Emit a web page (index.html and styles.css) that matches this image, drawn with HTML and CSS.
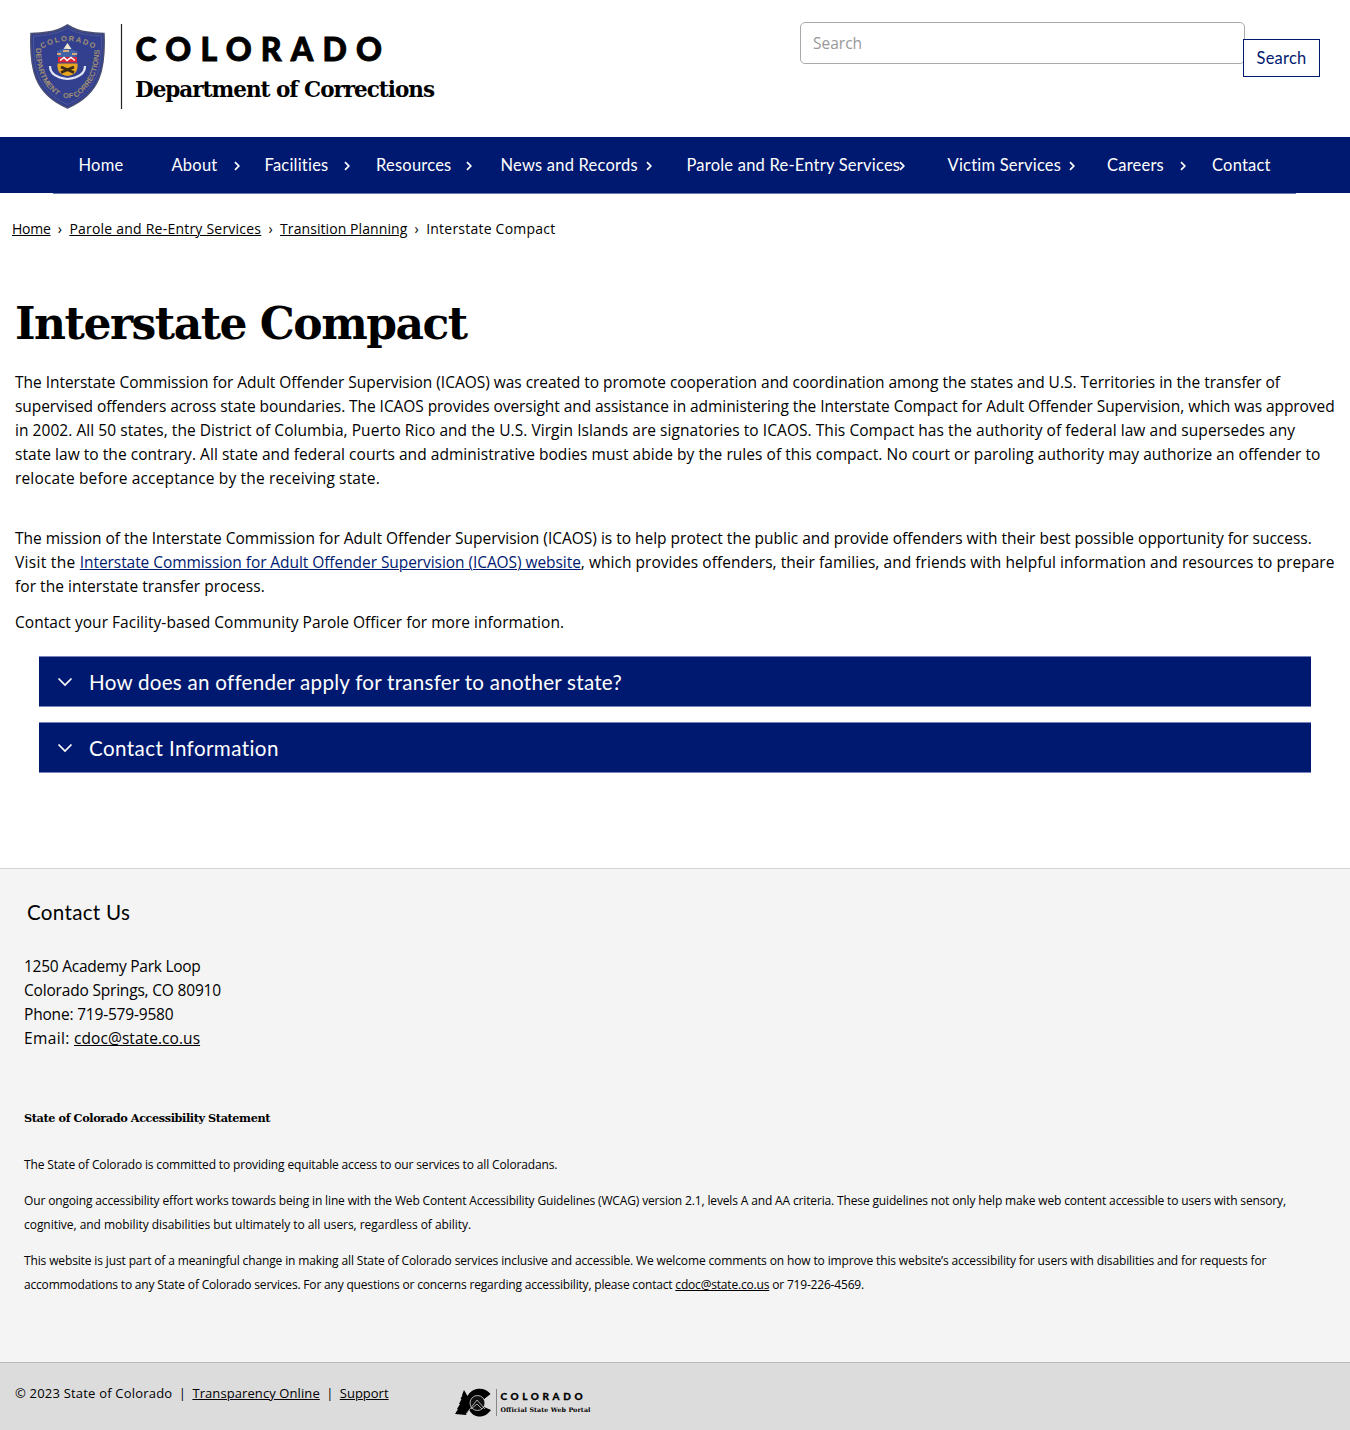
FILE: index.html
```html
<!DOCTYPE html>
<html lang="en">
<head>
<meta charset="utf-8">
<title>Interstate Compact | Department of Corrections</title>
<link rel="stylesheet" href="styles.css">
</head>
<body>
<header class="site-header">
  <a class="brand" href="#">
    <svg class="brand-logo" viewBox="0 0 410 90" width="410" height="90" role="img" aria-label="Colorado Department of Corrections">
      <defs>
        <path id="arc-top" d="M12 26 Q37.500 10 64 26"/>
        <path id="arc-left" d="M6 25 C6 51 14 64 29 74"/>
        <path id="arc-right" d="M46 75 C62 63 69 50 69.500 24"/>
      </defs>
      <path d="M37.500 2 C44 6 50 8.500 57 9 C62 10 68 10.500 74 10.500 C75.500 46 70.500 71 37.500 85 C4.500 71 -.5 46 1 10.500 C7 10.500 13 10 18 9 C25 8.500 31 6 37.500 2Z" fill="#33408f" stroke="#4b5073" stroke-width="1.500"/>
      <path d="M37.500 5 C45 10 58 12.500 71.500 13 C72 46 67 68.500 37.500 81.500 C8 68.500 3 46 3.500 13 C17 12.500 30 10 37.500 5Z" fill="none" stroke="#586094" stroke-width=".7"/>
      <g class="shield-text">
        <text><textPath href="#arc-top" textLength="55">COLORADO</textPath></text>
        <text><textPath href="#arc-left" textLength="55" lengthAdjust="spacingAndGlyphs">DEPARTMENT</textPath></text>
        <text><textPath href="#arc-right" textLength="56" lengthAdjust="spacingAndGlyphs">CORRECTIONS</textPath></text>
        <text x="33" y="75">OF</text>
      </g>
      <path d="M37.500 20 L41.500 26 H33.500Z" fill="#f2ead0"/>
      <path d="M27 28 Q37 23 48 29 L46 34 H28Z" fill="#4163a8"/>
      <path d="M27 31 h4 M33 28 h6 M42 31 h5" stroke="#d9a77a" stroke-width="2"/>
      <path d="M28 34 H47 V39.500 H28Z" fill="#d5293b"/>
      <path d="M30 37.500 l4 -3 3 3 4 -3 4 3" stroke="#fff" stroke-width="1.500" fill="none"/>
      <path d="M27.500 40.500 H47.500 Q48.500 52 37.500 53 Q26.500 52 27.500 40.500Z" fill="#e8a51d"/>
      <path d="M31 44 l13 5.500 M44 44 l-13 5.500" stroke="#3a2b17" stroke-width="2.800"/>
      <path d="M20 43 Q20 54 37.500 56 Q55 54 55 43" stroke="#e2e5f3" stroke-width="2.200" fill="none"/>
      <path d="M91.500 1 V86" stroke="#222" stroke-width="1.200"/>
      <text class="brand-state" x="105.500" y="37.500" textLength="246.500">COLORADO</text>
      <text class="brand-dept" x="105" y="73.500" textLength="300">Department of Corrections</text>
    </svg>
  </a>
  <form class="search">
    <input class="search-field" type="text" placeholder="Search" aria-label="Search">
    <button class="search-button" type="button">Search</button>
  </form>
</header>
<nav class="main-nav">
  <ul class="nav-list">
    <li><a href="#"><span>Home</span></a></li>
    <li><a href="#"><span>About</span><svg class="chev" viewBox="0 0 6 10"><path d="M1 1.200 4.800 5 1 8.800"/></svg></a></li>
    <li><a href="#"><span>Facilities</span><svg class="chev" viewBox="0 0 6 10"><path d="M1 1.200 4.800 5 1 8.800"/></svg></a></li>
    <li><a href="#"><span>Resources</span><svg class="chev" viewBox="0 0 6 10"><path d="M1 1.200 4.800 5 1 8.800"/></svg></a></li>
    <li><a href="#"><span>News and Records</span><svg class="chev" viewBox="0 0 6 10"><path d="M1 1.200 4.800 5 1 8.800"/></svg></a></li>
    <li><a href="#"><span>Parole and Re-Entry Services</span><svg class="chev" viewBox="0 0 6 10"><path d="M1 1.200 4.800 5 1 8.800"/></svg></a></li>
    <li><a href="#"><span>Victim Services</span><svg class="chev" viewBox="0 0 6 10"><path d="M1 1.200 4.800 5 1 8.800"/></svg></a></li>
    <li><a href="#"><span>Careers</span><svg class="chev" viewBox="0 0 6 10"><path d="M1 1.200 4.800 5 1 8.800"/></svg></a></li>
    <li><a href="#"><span>Contact</span></a></li>
  </ul>
</nav>
<div class="breadcrumb">
  <a href="#">Home</a><i>›</i><a href="#">Parole and Re-Entry Services</a><i>›</i><a href="#">Transition Planning</a><i>›</i><span>Interstate Compact</span>
</div>
<main class="content">
  <h1>Interstate Compact</h1>
  <p class="lead"><span>The Interstate Commission for Adult Offender Supervision (ICAOS) was created to promote cooperation and coordination among the states and U.S. Territories in the transfer of</span><br><span>supervised offenders across state boundaries. The ICAOS provides oversight and assistance in administering the Interstate Compact for Adult Offender Supervision, which was approved</span><br><span>in 2002. All 50 states, the District of Columbia, Puerto Rico and the U.S. Virgin Islands are signatories to ICAOS. This Compact has the authority of federal law and supersedes any</span><br><span>state law to the contrary. All state and federal courts and administrative bodies must abide by the rules of this compact. No court or paroling authority may authorize an offender to</span><br><span>relocate before acceptance by the receiving state.</span></p>
  <p class="mission">The mission of the Interstate Commission for Adult Offender Supervision (ICAOS) is to help protect the public and provide offenders with their best possible opportunity for success.<br><span>Visit the </span><a href="#">Interstate Commission for Adult Offender Supervision (ICAOS) website</a><span>, which provides offenders, their families, and friends with helpful information and resources to prepare</span><br><span>for the interstate transfer process.</span></p>
  <p class="officer">Contact your Facility-based Community Parole Officer for more information.</p>
  <div class="accordion">
    <div class="accordion-item"><svg class="down" viewBox="0 0 16 10"><path d="M1.500 1.500 8 8 14.500 1.500"/></svg><span>How does an offender apply for transfer to another state?</span></div>
    <div class="accordion-item"><svg class="down" viewBox="0 0 16 10"><path d="M1.500 1.500 8 8 14.500 1.500"/></svg><span>Contact Information</span></div>
  </div>
</main>
<footer>
  <section class="footer-main">
    <h2>Contact Us</h2>
    <p class="address"><span>1250 Academy Park Loop</span><br><span>Colorado Springs, CO 80910</span><br><span>Phone: 719-579-9580</span><br><span>Email: </span><a href="#">cdoc@state.co.us</a></p>
    <h3>State of Colorado Accessibility Statement</h3>
    <div class="statement">
      <p>The State of Colorado is committed to providing equitable access to our services to all Coloradans.</p>
      <p>Our ongoing accessibility effort works towards being in line with the Web Content Accessibility Guidelines (WCAG) version 2.1, levels A and AA criteria. These guidelines not only help make web content accessible to users with sensory,<br><span class="loose">cognitive, and mobility disabilities but ultimately to all users, regardless of ability.</span></p>
      <p><span class="medium">This website is just part of a meaningful change in making all State of Colorado services inclusive and accessible. We welcome comments on how to improve this website’s accessibility for users with disabilities and for requests for</span><br><span class="tight">accommodations to any State of Colorado services. For any questions or concerns regarding accessibility, please contact <a href="#">cdoc@state.co.us</a> or 719-226-4569.</span></p>
    </div>
  </section>
  <section class="footer-bar">
    <div class="legal"><span>© 2023 State of Colorado</span><b>|</b><a href="#">Transparency Online</a><b>|</b><a href="#">Support</a></div>
    <svg class="portal-logo" viewBox="0 0 138 32" width="138" height="32" role="img" aria-label="Colorado Official State Web Portal">
      <path d="M1 26 L4 21 3 21 6 16 5 16 7.500 11 6.500 11 8.500 7 8 7 10 2 13.500 8 C18 0 28 -1 36 6 L30 11 C25 7 20 11 18 17 L12 27Z" fill="#000"/>
      <path d="M36.500 6 C31 -1 19 -1 15 7 C11 14 14 27 24 28.500 C30 29 34 26 37 22 L30 19 C27 23 21 21 21 15 C21 9 28 8 30 11Z" fill="#000"/>
      <circle cx="23.500" cy="15" r="7.500" fill="#111" stroke="#ddd" stroke-width=".8"/>
      <path d="M12 26 L23 12 31 21 M17 21 l6 -5 5 5" stroke="#ccc" stroke-width=".8" fill="none"/>
      <path d="M42.500 1 V28" stroke="#888" stroke-width="1"/>
      <text class="portal-state" x="46.500" y="12" textLength="82">COLORADO</text>
      <text class="portal-tag" x="46.500" y="24" textLength="90">Official State Web Portal</text>
    </svg>
  </section>
</footer>
</body>
</html>
```
FILE: styles.css
```css
* { box-sizing: border-box; }
body { margin: 0; background: #fff; color: #000; font: 15.5px/24px "Open Sans", "Noto Sans", sans-serif; }
a { color: inherit; text-decoration: underline; text-underline-offset: 1px; text-decoration-thickness: 1px; }
h1, h2, h3, p, ul { margin: 0; padding: 0; }

/* Header */
.site-header { display: flex; justify-content: space-between; align-items: flex-start; height: 137px; padding: 22px 30px 0; }
.brand { display: block; margin-top: 1px; }
.brand-logo { display: block; }
.shield-text { font: 700 7.5px "Liberation Sans", sans-serif; fill: #a08f72; }
.brand-state { font: 900 32px Lato, sans-serif; stroke: #000; stroke-width: .9px; }
.brand-dept { font: 700 21.5px "DejaVu Serif", serif; }
.search { display: flex; align-items: flex-start; }
.search-field { width: 445px; height: 42px; padding: 0 12px; border: 1px solid #aaa; border-radius: 5px; background: #fff; font: 15.5px "Open Sans", sans-serif; }
.search-field::placeholder { color: #999; }
.search-button { width: 77px; height: 38px; margin: 17px 0 0 -2px; padding: 0; border: 1px solid #001970; background: #fff; color: #001970; font: 16.5px Lato, sans-serif; letter-spacing: .2px; }

/* Navigation */
.main-nav { height: 56px; background: #001970; }
.nav-list { display: flex; width: 1243px; height: 57px; margin: 0 0 0 53px; padding-left: 25.5px; border-bottom: 1px solid #6a79b0; list-style: none; background: #001970; }
.nav-list a { display: flex; justify-content: space-between; align-items: center; height: 57px; color: #fff; text-decoration: none; font: 16.5px/24px Lato, sans-serif; letter-spacing: .22px; white-space: nowrap; }
.nav-list span { margin-top: -1px; }
.nav-list li:nth-child(1) { width: 93px; }
.nav-list li:nth-child(2) { width: 68px; margin-right: 25px; }
.nav-list li:nth-child(3) { width: 85px; margin-right: 26.5px; }
.nav-list li:nth-child(4) { width: 96px; margin-right: 28.5px; }
.nav-list li:nth-child(5) { width: 151px; margin-right: 35px; }
.nav-list li:nth-child(6) { width: 218px; margin-right: 43px; }
.nav-list li:nth-child(7) { width: 127px; margin-right: 32.5px; }
.nav-list li:nth-child(8) { width: 79px; margin-right: 26px; }
.nav-list li:nth-child(6) span { width: 212px; }
.chev { width: 6px; height: 10px; flex: none; }
.chev path, .down path { fill: none; stroke: #fff; stroke-width: 1.7; }

.breadcrumb { display: flex; padding: 24px 12px 0; font-size: 14px; letter-spacing: .22px; }
.breadcrumb a:first-child { letter-spacing: -.25px; }
.breadcrumb a:nth-of-type(3) { letter-spacing: .08px; }
.breadcrumb i { width: 18.8px; text-align: center; font-style: normal; }

/* Article; each line of copy carries its own tracking */
.content { padding: 52px 15px 0; white-space: nowrap; }
h1 { font: 700 44px/62px "DejaVu Serif", serif; letter-spacing: -1.5px; }
.content p { margin-bottom: 12px; }
.content .lead { margin: 15px 0 36px; }
.content p a { color: #001970; }
.lead span:nth-of-type(1) { letter-spacing: -.028px; }
.lead span:nth-of-type(2) { letter-spacing: -.067px; }
.lead span:nth-of-type(3) { letter-spacing: .053px; }
.lead span:nth-of-type(4) { letter-spacing: .044px; }
.lead span:nth-of-type(5) { letter-spacing: .15px; }
.mission { letter-spacing: -.01px; }
.mission span:nth-of-type(1) { letter-spacing: .3px; }
.mission a { letter-spacing: -.066px; }
.mission span:nth-of-type(2), .mission span:nth-of-type(3) { letter-spacing: .044px; }
.officer { letter-spacing: .03px; }
.accordion { display: grid; gap: 15px; padding: 10px 24px 0; }
.accordion-item { display: flex; align-items: center; gap: 16px; height: 51px; padding-left: 18px; border: solid #7883ba; border-width: 1px 0; background: #001970; color: #fff; font: 20.6px/24px Lato, sans-serif; letter-spacing: .25px; }
.accordion-item:last-child { letter-spacing: .4px; }
.accordion-item span { margin-top: 1px; }
.down { width: 16px; height: 10px; }

/* Footer */
.footer-main { height: 494px; margin-top: 95px; padding: 31px 24px 0; border-top: 1px solid #d4d4d4; background: #f4f4f4; white-space: nowrap; }
h2 { padding-left: 3px; font: 400 20.6px/24px Lato, sans-serif; letter-spacing: .3px; }
.address { margin-top: 30px; letter-spacing: -.19px; }
.address span:nth-of-type(1) { letter-spacing: -.26px; }
.address span:nth-of-type(4) { letter-spacing: .36px; }
.address a { letter-spacing: .06px; }
h3 { margin-top: 56px; font: 700 11.3px/24px "DejaVu Serif", serif; letter-spacing: -.42px; }
.statement { margin-top: 23px; font-size: 12px; letter-spacing: -.146px; }
.statement p { margin-bottom: 12px; }
.loose { letter-spacing: -.045px; }
.medium { letter-spacing: -.134px; }
.tight { letter-spacing: -.183px; }
.footer-bar { display: flex; align-items: flex-start; height: 68px; padding: 0 15px; border-top: 1px solid #b8b8b8; background: #dcdcdc; }
.legal { display: flex; width: 439px; padding-top: 18px; font-size: 13px; white-space: nowrap; }
.legal span { letter-spacing: .2px; }
.legal a:nth-of-type(1) { letter-spacing: .09px; }
.legal b { width: 20px; text-align: center; font-weight: 400; }
.portal-logo { margin-top: 25px; }
.portal-state { font: 900 10px Lato, sans-serif; stroke: #000; stroke-width: .3px; }
.portal-tag { font: 700 6.3px "DejaVu Serif", serif; }
```
